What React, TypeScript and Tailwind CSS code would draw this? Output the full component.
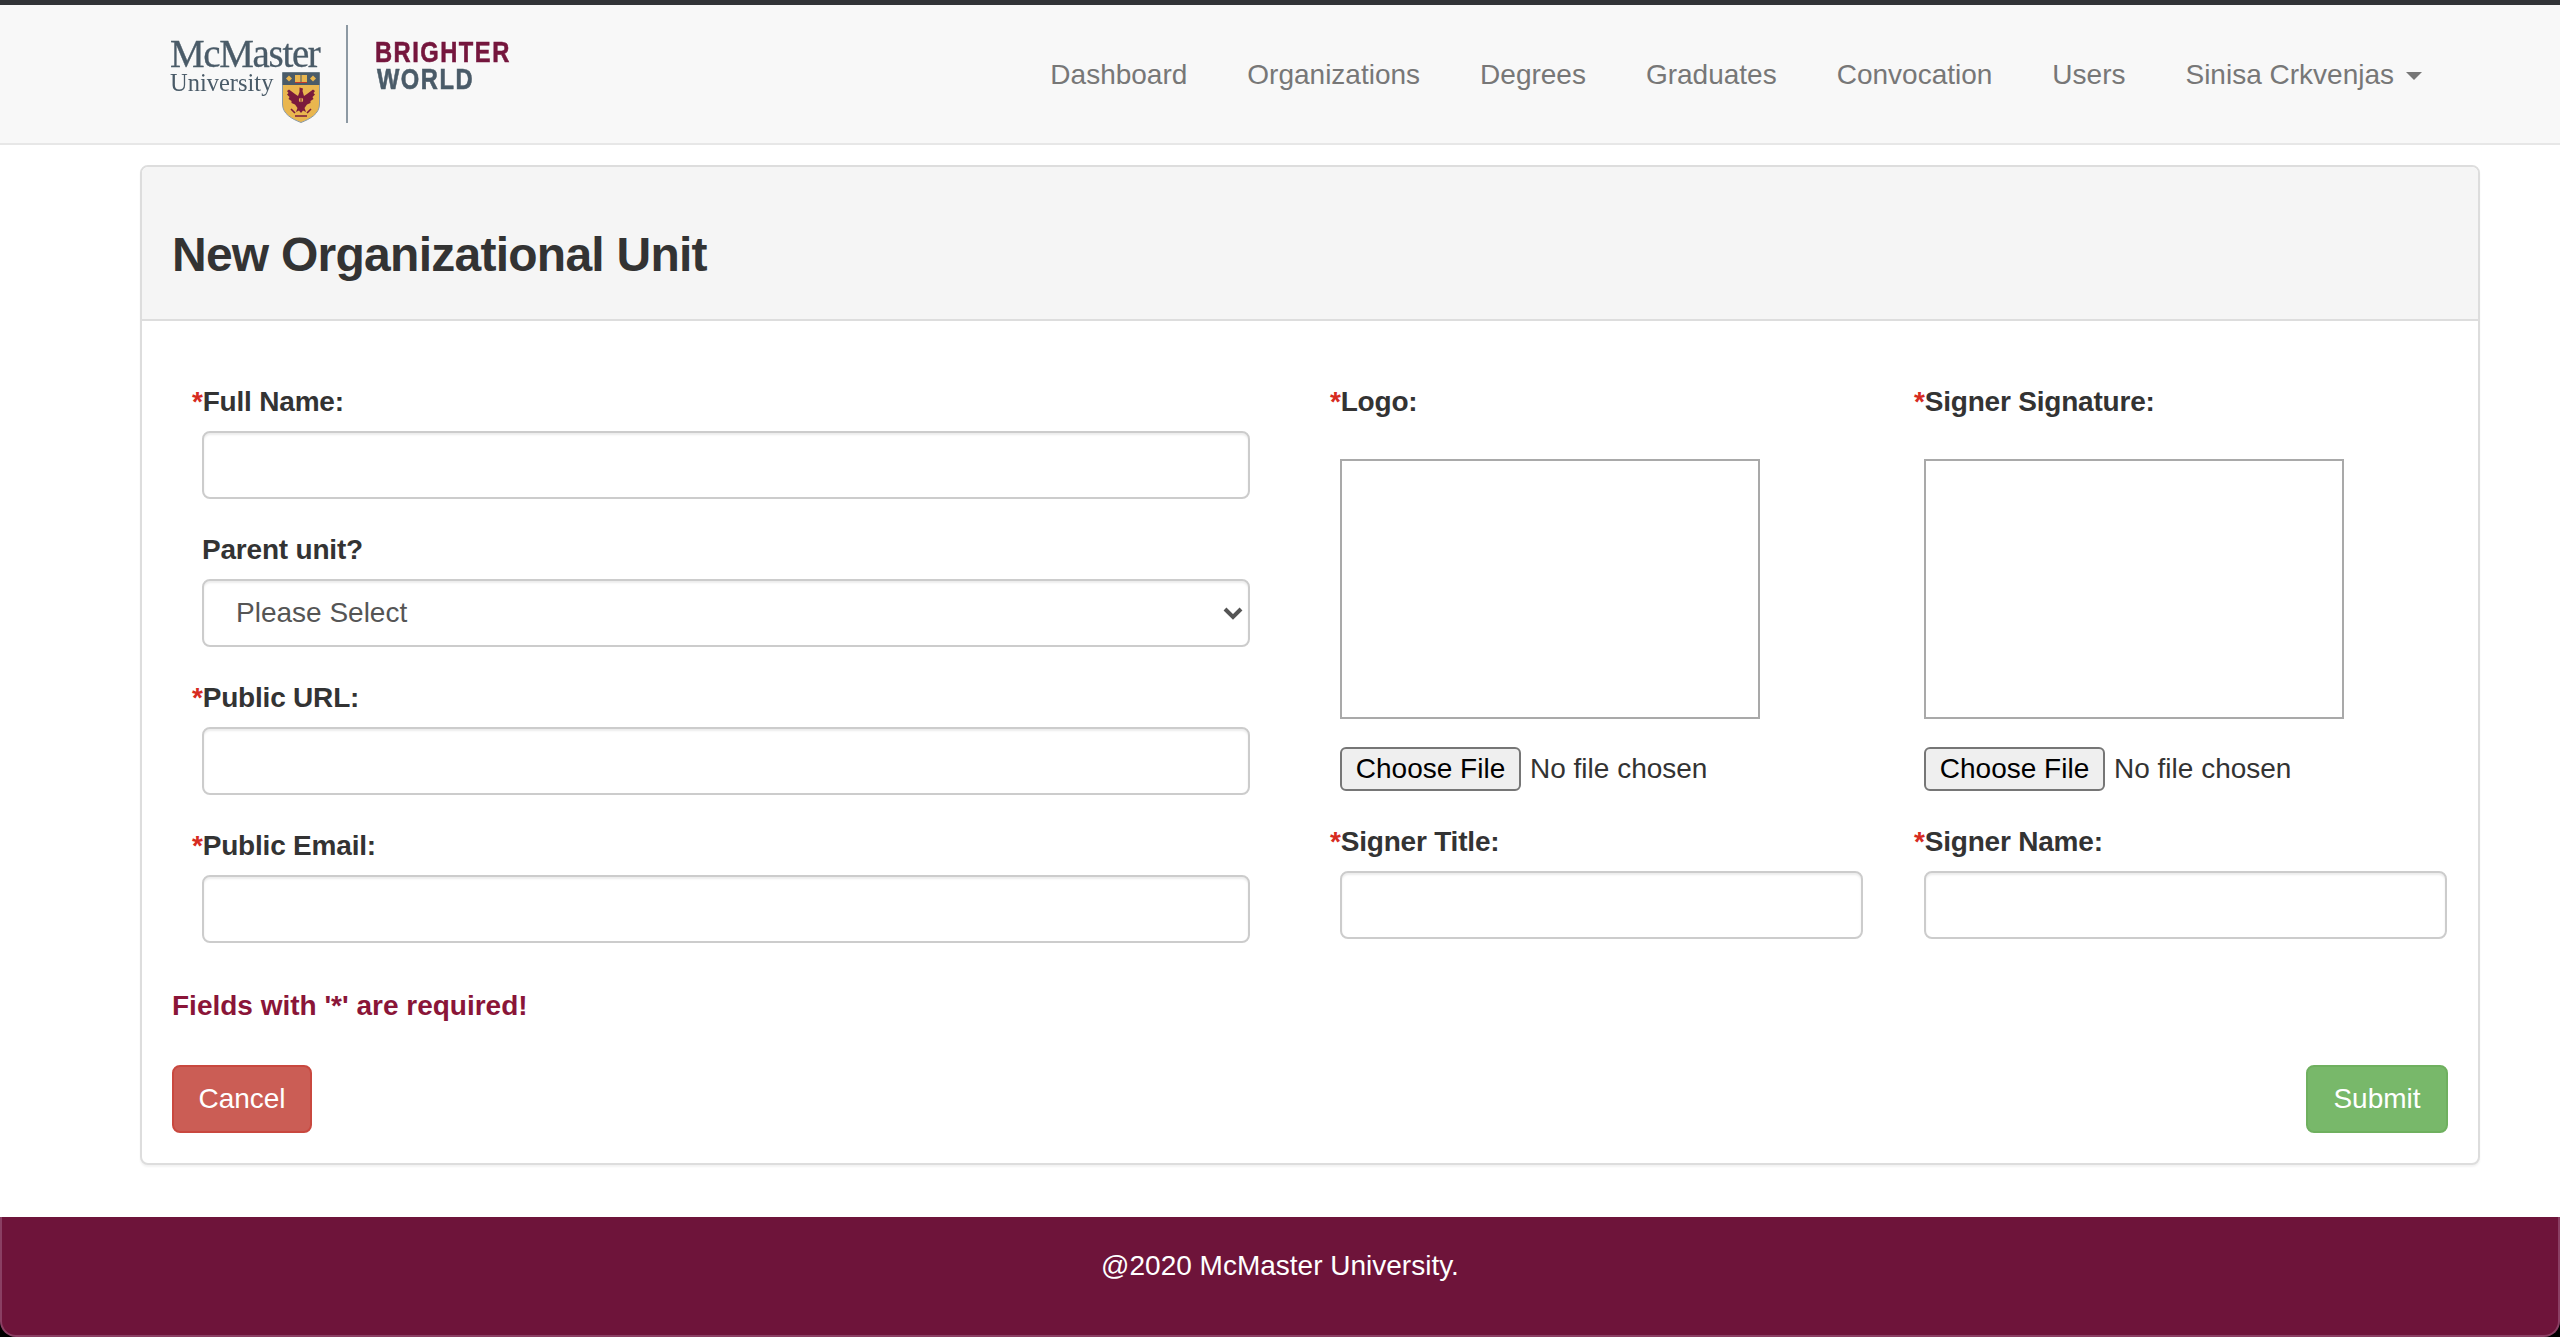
import React from "react";

const font = "font-['Liberation_Sans',Arial,sans-serif]";

function Crest() {
  return (
    <svg width="38" height="51" viewBox="0 0 38 51" className="shrink-0 mt-[1px] blur-[0.4px]">
      <path d="M0.5 0.5H37.5V32C37.5 42 28 47 19 50.5C10 47 0.5 42 0.5 32Z" fill="#e9b64f" stroke="#8b9aa5" strokeWidth="1" />
      <rect x="0.5" y="0.5" width="37" height="12.5" fill="#4a5b68" />
      <path d="M7 3.5L10 6.5L7 9.5L4 6.5Z" fill="#e9b64f" />
      <path d="M31 3.5L34 6.5L31 9.5L28 6.5Z" fill="#e9b64f" />
      <path d="M13 3H18.5V10.5H13Z" fill="#e9b64f" />
      <path d="M19.5 3H25V10.5H19.5Z" fill="#e9b64f" />
      <path d="M13 10.5H25" stroke="#c0392b" strokeWidth="1" />
      <path d="M17.5 15.5L21 16.5L20.5 19L22 24L25 22L31 17.5L33 19L31.5 21L33 22.5L30.5 25L31.5 27L28.5 29L28.5 31L25 32.5L22.5 36L24 40L21 38.5L19 41L17 38.5L14 40L15.5 36L13 32.5L9.5 31L9.5 29L6.5 27L7.5 25L5 22.5L6.5 21L5 19L7 17.5L13 22L16 24L17.5 20Z" fill="#7a1a3c" />
      <circle cx="19" cy="28" r="2.2" fill="#e9b64f" />
      <path d="M19 25V33" stroke="#7a1a3c" strokeWidth="1" />
      <path d="M9 37L13 41M29 37L25 41M13 44H25" stroke="#7a1a3c" strokeWidth="1.6" />
    </svg>
  );
}

function Logo() {
  return (
    <div className="flex items-start h-[98px]">
      <div className="flex flex-col w-[151px] mt-[12px] font-['Liberation_Serif',serif] text-[#4a5b68]">
        <div className="text-[39px] leading-[34px] tracking-[-1.35px] whitespace-nowrap blur-[0.3px] [-webkit-text-stroke:0.3px_#4a5b68]">McMaster</div>
        <div className="flex items-start">
          <div className="text-[24.5px] leading-[24px] whitespace-nowrap w-[112px] blur-[0.3px]">University</div>
          <Crest />
        </div>
      </div>
      <div className="w-[2px] h-[98px] bg-[#8d99a3] ml-[25px]" />
      <div className="ml-[27px] mt-[13px] flex flex-col font-bold text-[30px] leading-[27px] tracking-[1.9px] blur-[0.3px] whitespace-nowrap">
        <div className="text-[#75163d] origin-left scale-x-[0.79] [-webkit-text-stroke:0.6px_#75163d]">BRIGHTER</div>
        <div className="text-[#4a5b68] origin-left scale-x-[0.79] ml-[2px] [-webkit-text-stroke:0.6px_#4a5b68]">WORLD</div>
      </div>
    </div>
  );
}

function Nav() {
  const items = ["Dashboard", "Organizations", "Degrees", "Graduates", "Convocation", "Users"];
  return (
    <nav className="h-[140px] bg-[#f8f8f8] border-b-2 border-[#e7e7e7] flex items-center justify-between pl-[170px] pr-[138px]">
      <Logo />
      <div className="mt-[2px] flex items-center gap-[60px] text-[28px] leading-[40px] text-[#777777]">
        {items.map((t) => (
          <a key={t}>{t}</a>
        ))}
        <a className="flex items-center">
          Sinisa Crkvenjas
          <span className="ml-[12px] mt-[2px] w-0 h-0 border-x-[8px] border-x-transparent border-t-[8px] border-t-[#777777]" />
        </a>
      </div>
    </nav>
  );
}

function Label({ text, required = true }: { text: string; required?: boolean }) {
  return (
    <label className="block h-[40px] leading-[42px] text-[28px] font-bold tracking-[-0.2px] text-[#333333] whitespace-nowrap">
      {required && <span className="text-[#d62b1f] -ml-[10px]">*</span>}
      {text}
    </label>
  );
}

const inputCls =
  "block w-full h-[68px] bg-white border-2 border-[#cccccc] rounded-[8px] shadow-[inset_0_2px_2px_rgba(0,0,0,0.075)] outline-none";

function Field({ label, required = true }: { label: string; required?: boolean }) {
  return (
    <div className="mb-[30px]">
      <Label text={label} required={required} />
      <input type="text" className={`${inputCls} mt-[10px]`} />
    </div>
  );
}

function ImageColumn({ upload, signer }: { upload: string; signer: string }) {
  return (
    <div className="w-[523px] shrink-0">
      <Label text={upload} />
      <div className="mt-[38px] w-[420px] h-[260px] border-2 border-[#a9a9a9] bg-white" />
      <div className="mt-[28px] flex items-center h-[44px] text-[28px]">
        <button
          type="button"
          className="h-[44px] w-[181px] bg-[#efefef] border-2 border-[#767676] rounded-[6px] text-black leading-none"
        >
          Choose File
        </button>
        <span className="ml-[9px] text-[#333333]">No file chosen</span>
      </div>
      <div className="mt-[30px]">
        <Label text={signer} />
        <input type="text" className={`${inputCls} mt-[10px]`} />
      </div>
    </div>
  );
}

function Panel() {
  return (
    <section className="mt-[20px] ml-[140px] mr-[80px] border-2 border-[#dddddd] rounded-[8px] bg-white shadow-[0_2px_2px_rgba(0,0,0,0.05)]">
      <header className="bg-[#f5f5f5] border-b-2 border-[#dddddd] rounded-t-[6px] px-[30px] pt-[61px] pb-[38px]">
        <h3 className="text-[48px] leading-[53px] font-bold tracking-[-0.75px] text-[#333333]">New Organizational Unit</h3>
      </header>
      <div className="px-[30px] pt-[60px] pb-[30px]">
        <div className="flex items-start">
          <div className="w-[1048px] shrink-0 ml-[30px]">
            <Field label="Full Name:" />
            <div className="mb-[30px]">
              <Label text="Parent unit?" required={false} />
              <div className="relative mt-[10px]">
                <select className={`${inputCls} appearance-none pl-[32px] text-[28px] text-[#555555] ${font}`}>
                  <option>Please Select</option>
                </select>
                <svg width="20" height="14" viewBox="0 0 20 14" className="absolute right-[7px] top-[27px]">
                  <path d="M2 3L10 11L18 3" fill="none" stroke="#555555" strokeWidth="4" />
                </svg>
              </div>
            </div>
            <Field label="Public URL:" />
            <div>
              <Label text="Public Email:" />
              <input type="text" className={`${inputCls} mt-[10px]`} />
            </div>
          </div>
          <div className="ml-[90px] flex gap-[61px]">
            <ImageColumn upload="Logo:" signer="Signer Title:" />
            <ImageColumn upload="Signer Signature:" signer="Signer Name:" />
          </div>
        </div>
        <p className="mt-[42px] h-[40px] leading-[42px] text-[28px] font-bold text-[#8a1538]">
          Fields with '*' are required!
        </p>
        <div className="mt-[40px] flex justify-between">
          <button
            type="button"
            className="w-[140px] h-[68px] rounded-[8px] border-2 border-[#c9483f] bg-[#cb5d55] text-white text-[28px]"
          >
            Cancel
          </button>
          <button
            type="button"
            className="w-[142px] h-[68px] rounded-[8px] border-2 border-[#6fb05f] bg-[#78b86a] text-white text-[28px]"
          >
            Submit
          </button>
        </div>
      </div>
    </section>
  );
}

function Footer() {
  return (
    <div className="bg-black mt-[52px]">
      <footer className="h-[120px] bg-[#6e143a] border-x-2 border-b-2 border-[#8a3f63] rounded-b-[16px] pt-[29px] text-center text-[28px] leading-[40px] text-white">
        @2020 McMaster University.
      </footer>
    </div>
  );
}

export default function App() {
  return (
    <div className={`w-[2560px] h-[1337px] overflow-hidden bg-white ${font}`}>
      <div className="h-[5px] bg-[#323437]" />
      <Nav />
      <Panel />
      <Footer />
    </div>
  );
}
